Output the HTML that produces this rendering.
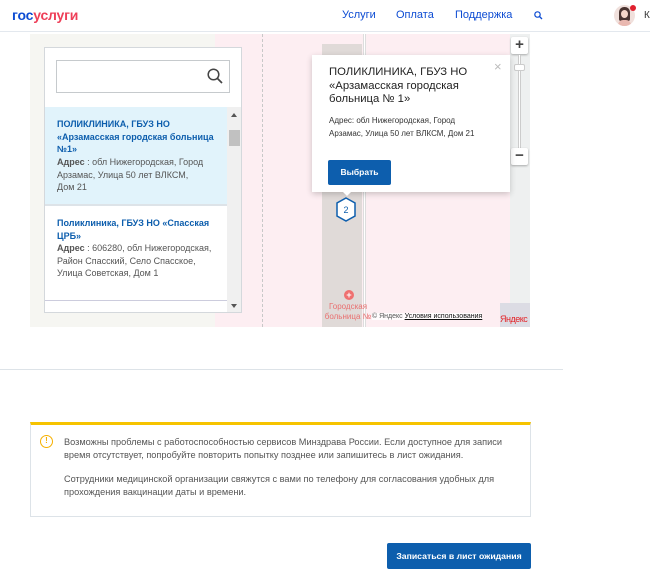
<!DOCTYPE html>
<html><head><meta charset="utf-8"><style>
*{margin:0;padding:0;box-sizing:border-box}
body{width:650px;height:581px;background:#fff;font-family:"Liberation Sans",sans-serif;position:relative;overflow:hidden;color:#333}
.a{position:absolute}
</style></head><body>
<div class="a" style="left:0;top:0;width:650px;height:32px;border-bottom:1px solid #e3e8ee"></div>
<div class="a" style="left:12px;top:7px;font-size:14px;font-weight:bold;letter-spacing:-0.2px"><span style="color:#0d4cd3">гос</span><span style="color:#ee3f58">услуги</span></div>
<div class="a" style="left:342px;top:9px;font-size:11px;color:#0d4cd3">Услуги</div>
<div class="a" style="left:396px;top:9px;font-size:11px;color:#0d4cd3">Оплата</div>
<div class="a" style="left:455px;top:9px;font-size:11px;color:#0d4cd3">Поддержка</div>
<svg class="a" style="left:534px;top:11px" width="9" height="9"><circle cx="3.5" cy="3.5" r="2.7" fill="none" stroke="#0d4cd3" stroke-width="1.2"/><path d="M5.5 5.5L8 8" stroke="#0d4cd3" stroke-width="1.3"/></svg>
<div class="a" style="left:614px;top:5px;width:21px;height:21px;border-radius:50%;background:#f0e0dc;overflow:hidden"><div class="a" style="left:5px;top:2px;width:11px;height:14px;border-radius:5px 5px 2px 2px;background:#4a3430"></div><div class="a" style="left:7px;top:5px;width:7px;height:8px;border-radius:50%;background:#f6d6c8"></div><div class="a" style="left:4px;top:15px;width:13px;height:8px;border-radius:5px 5px 0 0;background:#e9b8b0"></div></div>
<div class="a" style="left:630px;top:5px;width:6px;height:6px;border-radius:50%;background:#e0202f"></div>
<div class="a" style="left:644px;top:10px;font-size:10px">К</div>

<div class="a" style="left:30px;top:34px;width:500px;height:293px;background:#fdeef2;overflow:hidden">
 <div class="a" style="left:0;top:0;width:185px;height:293px;background:#f6f6f2"></div>
 <div class="a" style="left:232px;top:0;width:0;height:293px;border-left:1px dashed #c8c8c8"></div>
 <div class="a" style="left:292px;top:10px;width:40px;height:283px;background:#e0dad8"></div>
 <div class="a" style="left:333px;top:0;width:3px;height:293px;background:#fff;border-left:1px solid #ddd;border-right:1px solid #ddd"></div>
 <div class="a" style="left:480px;top:0;width:20px;height:293px;background:#eef0f0"></div>
</div>
<div class="a" style="left:511px;top:37px;width:17px;height:17px;background:#fff;box-shadow:0 1px 2px rgba(0,0,0,.3);border-radius:2px;font-size:15px;line-height:16px;text-align:center;color:#444;font-weight:bold">+</div>
<div class="a" style="left:518px;top:55px;width:3px;height:95px;background:#fff;border-left:1px solid #ccc;border-right:1px solid #ccc"></div>
<div class="a" style="left:514px;top:64px;width:11px;height:7px;background:#fff;border:1px solid #ccc;border-radius:2px"></div>
<div class="a" style="left:511px;top:148px;width:17px;height:17px;background:#fff;box-shadow:0 1px 2px rgba(0,0,0,.3);border-radius:2px;font-size:15px;line-height:16px;text-align:center;color:#444;font-weight:bold">−</div>

<div class="a" style="left:44px;top:47px;width:198px;height:266px;background:#fff;border:1px solid #d4d8dc;overflow:hidden">
 <div class="a" style="left:11px;top:12px;width:174px;height:33px;border:1px solid #c6cacd"></div>
 <svg class="a" style="left:162px;top:20px" width="16" height="16"><circle cx="6.5" cy="6.5" r="5.3" fill="none" stroke="#444" stroke-width="1.5"/><path d="M10.5 10.5L15 15" stroke="#444" stroke-width="1.7"/></svg>
 <div class="a" style="left:0;top:59px;width:182px;height:97px;background:#e1f3fb"></div>
 <div class="a" style="left:12px;top:70px;width:162px;font-size:9px;line-height:12.5px;color:#0d5ead;font-weight:bold">ПОЛИКЛИНИКА, ГБУЗ НО «Арзамасская городская больница №1»</div>
 <div class="a" style="left:12px;top:108px;width:152px;font-size:9px;line-height:12.5px;color:#555"><b>Адрес</b> : обл Нижегородская, Город Арзамас, Улица 50 лет ВЛКСМ, Дом&nbsp;21</div>
 <div class="a" style="left:0;top:156px;width:182px;height:2px;background:#dde3e8"></div>
 <div class="a" style="left:12px;top:169px;width:160px;font-size:9px;line-height:12.5px;color:#0d5ead;font-weight:bold">Поликлиника, ГБУЗ НО «Спасская ЦРБ»</div>
 <div class="a" style="left:12px;top:194px;width:158px;font-size:9px;line-height:12.5px;color:#555"><b>Адрес</b> : 606280, обл Нижегородская, Район Спасский, Село Спасское, Улица Советская, Дом 1</div>
 <div class="a" style="left:0;top:252px;width:182px;height:1px;background:#ccd"></div>
 <div class="a" style="left:182px;top:59px;width:15px;height:207px;background:#f0f0f0"></div>
 <div class="a" style="left:184px;top:82px;width:11px;height:16px;background:#c1c1c1"></div>
 <div class="a" style="left:186px;top:65px;width:0;height:0;border-left:3.5px solid transparent;border-right:3.5px solid transparent;border-bottom:4px solid #555"></div>
 <div class="a" style="left:186px;top:256px;width:0;height:0;border-left:3.5px solid transparent;border-right:3.5px solid transparent;border-top:4px solid #555"></div>
</div>

<div class="a" style="left:312px;top:55px;width:198px;height:137px;background:#fff;box-shadow:0 2px 6px rgba(0,0,0,.2)"></div>
<div class="a" style="left:342px;top:191px;width:0;height:0;border-left:5px solid transparent;border-right:5px solid transparent;border-top:5px solid #fff"></div>
<div class="a" style="left:494px;top:59px;font-size:13px;color:#bbb">×</div>
<div class="a" style="left:329px;top:66px;width:150px;font-size:11.3px;line-height:13.5px;color:#222">ПОЛИКЛИНИКА, ГБУЗ НО «Арзамасская городская больница № 1»</div>
<div class="a" style="left:329px;top:114px;width:155px;font-size:8px;line-height:13px;color:#333">Адрес: обл Нижегородская, Город Арзамас, Улица 50 лет ВЛКСМ, Дом 21</div>
<div class="a" style="left:328px;top:160px;width:63px;height:25px;background:#0d5ead;border-radius:2px;color:#fff;font-size:8.5px;font-weight:bold;line-height:25px;text-align:center">Выбрать</div>

<svg class="a" style="left:335px;top:197px" width="22" height="26"><polygon points="11,1 20,6 20,19 11,24 2,19 2,6" fill="#fff" stroke="#0d5ead" stroke-width="1.5"/><text x="11" y="16" font-size="9" text-anchor="middle" fill="#0d5ead" font-family="Liberation Sans">2</text></svg>
<div class="a" style="left:344px;top:290px;width:10px;height:10px;border-radius:50%;background:#ef7070;color:#fff;font-size:9px;line-height:10px;text-align:center;font-weight:bold">+</div>
<div class="a" style="left:322px;top:302px;width:52px;font-size:8px;line-height:10px;color:#e97070;text-align:center">Городская больница №</div>
<div class="a" style="left:372px;top:313px;font-size:7px;color:#555;background:rgba(255,255,255,.8)">© Яндекс <span style="text-decoration:underline;color:#111">Условия использования</span></div>
<div class="a" style="left:500px;top:303px;width:30px;height:24px;background:#dcdce4;font-size:9px;color:#e3252a;padding-top:11px;overflow:hidden;white-space:nowrap;letter-spacing:-0.5px">Яндекс</div>

<div class="a" style="left:0;top:369px;width:563px;height:1px;background:#dde3e8"></div>

<div class="a" style="left:30px;top:422px;width:501px;height:95px;border:1px solid #dde3e8;border-top:3px solid #f6c300"></div>
<div class="a" style="left:40px;top:435px;width:13px;height:13px;border:1.5px solid #f6b000;border-radius:50%;color:#f6b000;font-size:8px;font-weight:bold;text-align:center;line-height:10px">!</div>
<div class="a" style="left:64px;top:436px;width:455px;font-size:9.2px;line-height:13px;color:#555">Возможны проблемы с работоспособностью сервисов Минздрава России. Если доступное для записи время отсутствует, попробуйте повторить попытку позднее или запишитесь в лист ожидания.</div>
<div class="a" style="left:64px;top:473px;width:455px;font-size:9.2px;line-height:13px;color:#555">Сотрудники медицинской организации свяжутся с вами по телефону для согласования удобных для прохождения вакцинации даты и времени.</div>

<div class="a" style="left:387px;top:543px;width:144px;height:26px;background:#0d5ead;border-radius:2px;color:#fff;font-size:8.7px;font-weight:bold;line-height:26px;text-align:center">Записаться в лист ожидания</div>
</body></html>
